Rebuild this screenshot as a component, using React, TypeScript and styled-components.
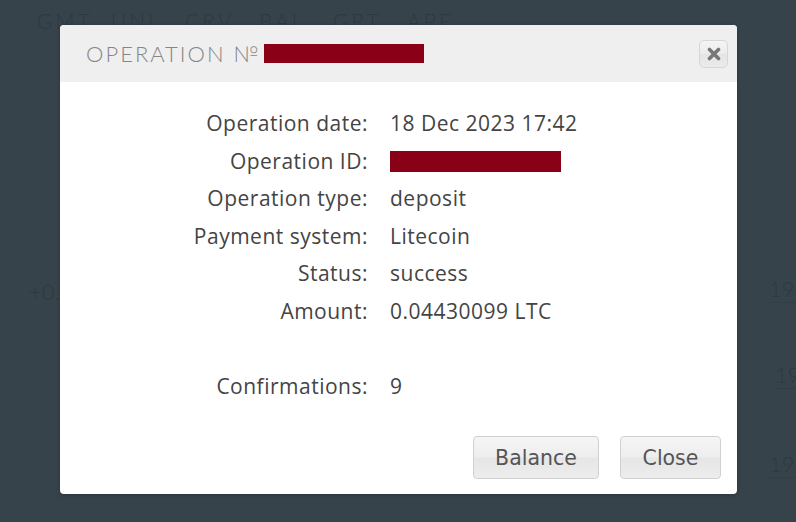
import { Fragment } from 'react';
import styled, { createGlobalStyle } from 'styled-components';

const GlobalStyle = createGlobalStyle`
  html, body {
    margin: 0;
    padding: 0;
    background: #36434b;
  }
  body {
    width: 796px;
    height: 522px;
    overflow: hidden;
  }
`;

const Page = styled.div`
  position: relative;
  width: 796px;
  height: 522px;
  background: #36434b;
  font-family: 'Lato', 'DejaVu Sans', sans-serif;
  overflow: hidden;
`;

const TickerRow = styled.div`
  display: flex;
  padding: 8px 0 0 37px;
  color: #2d3940;
  font-size: 21px;
  font-weight: 300;
  letter-spacing: 3px;
`;

const Ticker = styled.span`
  width: 74px;
`;

const Faded = styled.div<{ $top: number; $left: number; $dotted?: boolean }>`
  position: absolute;
  top: ${({ $top }) => $top}px;
  left: ${({ $left }) => $left}px;
  color: #2d3940;
  font-size: 22px;
  font-weight: 300;
  border-bottom: ${({ $dotted }) => ($dotted ? '1px dotted #2d3940' : 'none')};
`;

const Overlay = styled.div`
  position: absolute;
  inset: 0;
  display: flex;
  justify-content: center;
  padding-top: 25px;
`;

const Modal = styled.div`
  width: 677px;
  height: 469px;
  margin-left: 1px;
  background: #fff;
  border-radius: 4px;
  box-shadow: 0 1px 4px rgba(0, 0, 0, 0.2);
  display: flex;
  flex-direction: column;
  overflow: hidden;
`;

const Header = styled.div`
  height: 57px;
  background: #efefef;
  display: flex;
  align-items: center;
  padding: 0 9px 0 26px;
`;

const Title = styled.h3`
  flex: 1;
  margin: 0;
  display: flex;
  align-items: center;
  color: #868686;
  font-family: 'Lato', sans-serif;
  font-weight: 300;
  font-size: 22px;
  letter-spacing: 2px;
`;

const Redacted = styled.span<{ $w: number; $h: number }>`
  display: inline-block;
  width: ${({ $w }) => $w}px;
  height: ${({ $h }) => $h}px;
  background: #8a0017;
`;

const TitleRedacted = styled(Redacted)`
  margin-left: 3px;
`;

const CloseIcon = styled.button`
  width: 29px;
  height: 28px;
  padding: 0;
  margin-top: 1px;
  border: 1px solid #d6d6d6;
  border-radius: 5px;
  background: linear-gradient(#f4f4f4 0%, #ececec 50%, #e4e4e4 51%, #ebebeb 100%);
  display: flex;
  align-items: center;
  justify-content: center;
`;

const Body = styled.div`
  flex: 1;
  display: grid;
  grid-template-columns: 308px auto;
  column-gap: 22px;
  align-content: start;
  padding-top: 23px;
  font-family: 'Open Sans', 'Noto Sans', sans-serif;
  font-size: 21px;
  letter-spacing: 0.5px;
  line-height: 37.6px;
  color: #444;
`;

const Label = styled.div`
  text-align: right;
`;

const Value = styled.div`
  display: flex;
  align-items: center;
`;

const Spacer = styled.div`
  grid-column: 1 / 3;
  height: 37px;
`;

const Footer = styled.div`
  display: flex;
  justify-content: flex-end;
  gap: 21px;
  padding: 0 16px 15px;
`;

const Button = styled.button<{ $w: number }>`
  width: ${({ $w }) => $w}px;
  height: 43px;
  border: 1px solid #d0d0d0;
  border-radius: 4px;
  background: linear-gradient(#f5f5f5 0%, #eeeeee 48%, #e6e6e6 52%, #ededed 100%);
  color: #555;
  font-family: 'DejaVu Sans', sans-serif;
  font-size: 20.5px;
  padding: 0;
`;

const rows: [string, string | null][] = [
  ['Operation date:', '18 Dec 2023 17:42'],
  ['Operation ID:', null],
  ['Operation type:', 'deposit'],
  ['Payment system:', 'Litecoin'],
  ['Status:', 'success'],
  ['Amount:', '0.04430099 LTC'],
];

export default function App() {
  return (
    <Page>
      <GlobalStyle />
      <TickerRow>
        {['GMT', 'UNI', 'CRV', 'BAL', 'GRT', 'APE'].map(t => (
          <Ticker key={t}>{t}</Ticker>
        ))}
      </TickerRow>
      <Faded $top={278} $left={29}>+0.</Faded>
      <Faded $top={275} $left={769} $dotted>199</Faded>
      <Faded $top={361} $left={775} $dotted>199</Faded>
      <Faded $top={450} $left={769} $dotted>199</Faded>

      <Overlay>
        <Modal>
          <Header>
            <Title>
              OPERATION №<TitleRedacted $w={160} $h={19} />
            </Title>
            <CloseIcon aria-label="close">
              <svg width="14" height="14" viewBox="0 0 14 14">
                <path d="M2.5 2.5 L11.5 11.5 M11.5 2.5 L2.5 11.5" stroke="#777" strokeWidth="3.6" strokeLinecap="round" />
              </svg>
            </CloseIcon>
          </Header>
          <Body>
            {rows.map(([label, value]) => (
              <Fragment key={label}>
                <Label>{label}</Label>
                <Value>{value ?? <Redacted $w={171} $h={21} />}</Value>
              </Fragment>
            ))}
            <Spacer />
            <Label>Confirmations:</Label>
            <Value>9</Value>
          </Body>
          <Footer>
            <Button $w={126}>Balance</Button>
            <Button $w={101}>Close</Button>
          </Footer>
        </Modal>
      </Overlay>
    </Page>
  );
}
